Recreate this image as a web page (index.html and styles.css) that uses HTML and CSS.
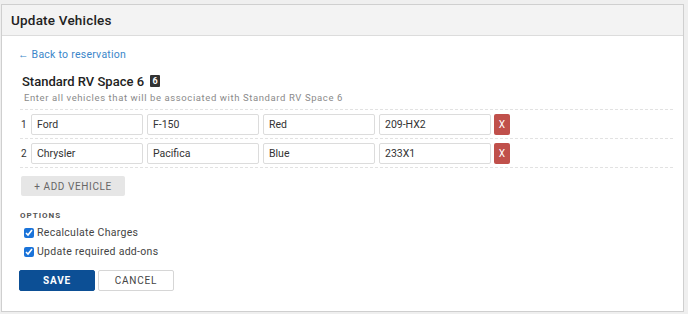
FILE: index.html
```html
<!DOCTYPE html>
<html lang="en">
<head>
    <meta charset="UTF-8">
    <title>Update Vehicles</title>
    <link rel="stylesheet" href="styles.css">
</head>
<body>
    <div class="panel">
        <div class="panel-header">
            <h1>Update Vehicles</h1>
        </div>
        <div class="panel-body">
            <a class="back-link" href="#">&larr; Back to reservation</a>

            <div class="site">
                <h2>Standard RV Space 6 <span class="badge">6</span></h2>
                <p class="hint">Enter all vehicles that will be associated with Standard RV Space 6</p>
            </div>

            <div class="vehicles">
                <div class="vehicle-row">
                    <span class="row-num">1</span>
                    <input type="text" value="Ford">
                    <input type="text" value="F-150">
                    <input type="text" value="Red">
                    <input type="text" value="209-HX2">
                    <button class="remove">X</button>
                </div>
                <div class="vehicle-row">
                    <span class="row-num">2</span>
                    <input type="text" value="Chrysler">
                    <input type="text" value="Pacifica">
                    <input type="text" value="Blue">
                    <input type="text" value="233X1">
                    <button class="remove">X</button>
                </div>
            </div>

            <button class="add-vehicle">+ ADD VEHICLE</button>

            <div class="options">
                <div class="options-title">OPTIONS</div>
                <label class="check"><input type="checkbox" checked> Recalculate Charges</label>
                <label class="check"><input type="checkbox" checked> Update required add-ons</label>
            </div>

            <div class="actions">
                <button class="btn-save">SAVE</button>
                <button class="btn-cancel">CANCEL</button>
            </div>
        </div>
    </div>
</body>
</html>
```

FILE: styles.css
```css
* {
    box-sizing: border-box;
    margin: 0;
    padding: 0;
}

body {
    font-family: Roboto, "Liberation Sans", sans-serif;
    background-color: #efefef;
    padding: 4px 4px 0 1px;
    color: #333;
}

.panel {
    background-color: #fff;
    border: 1px solid #cfcfcf;
    height: 308px;
}

.panel-header {
    background-color: #f3f3f3;
    border-bottom: 1px solid #dcdcdc;
    height: 31px;
    padding: 0 9px;
    display: flex;
    align-items: center;
}

h1 {
    font-size: 13.5px;
    font-weight: 500;
    color: #222;
    letter-spacing: 0.2px;
}

.panel-body {
    padding: 12px 10px 0 16px;
}

.back-link {
    display: block;
    font-size: 10.5px;
    color: #3b86c9;
    text-decoration: none;
    letter-spacing: 0.25px;
    height: 14px;
    line-height: 14px;
}

.site {
    margin-top: 10px;
    padding-left: 4px;
}

h2 {
    font-size: 13px;
    font-weight: 500;
    color: #222;
    display: flex;
    align-items: center;
    gap: 6px;
    height: 18px;
}

.badge {
    background-color: #333;
    color: #fff;
    font-size: 9px;
    font-weight: 700;
    width: 10px;
    height: 12px;
    display: inline-flex;
    align-items: center;
    justify-content: center;
    border-radius: 1px;
}

.hint {
    font-size: 9.5px;
    color: #8a8a8a;
    letter-spacing: 0.6px;
    margin-top: 2px;
    padding-left: 2px;
}

.vehicles {
    margin-top: 6px;
    margin-left: 2px;
    border-top: 1px dashed #e2e2e2;
}

.vehicle-row {
    display: flex;
    align-items: center;
    gap: 3px;
    padding: 3px 0;
    border-bottom: 1px dashed #e2e2e2;
    height: 29px;
}

.row-num {
    font-size: 10px;
    width: 8px;
    padding-left: 1px;
    color: #333;
}

.vehicle-row input {
    width: 112px;
    height: 21px;
    border: 1px solid #dcdcdc;
    border-radius: 2px;
    padding: 0 5px;
    font-family: inherit;
    font-size: 10.5px;
    color: #333;
    margin-right: 1px;
}

.remove {
    background-color: #c0504b;
    color: #fff;
    border: none;
    border-radius: 2px;
    width: 16px;
    height: 21px;
    font-family: inherit;
    font-size: 10px;
    margin-left: -1px;
}

.add-vehicle {
    margin-top: 8px;
    margin-left: 3px;
    width: 104px;
    height: 20px;
    background-color: #e6e6e6;
    color: #666;
    border: none;
    border-radius: 2px;
    font-family: inherit;
    font-size: 10px;
    letter-spacing: 0.6px;
}

.options {
    margin-top: 15px;
    padding-left: 2px;
}

.options-title {
    font-size: 8px;
    font-weight: 700;
    letter-spacing: 1px;
    color: #555;
    height: 12px;
}

.check {
    display: flex;
    align-items: center;
    gap: 3px;
    font-size: 10.5px;
    color: #444;
    letter-spacing: 0.3px;
    height: 19px;
    padding-left: 4px;
}

.check input {
    width: 10px;
    height: 10px;
    accent-color: #1a73d9;
}

.actions {
    margin-top: 9px;
    display: flex;
    gap: 3px;
    padding-left: 1px;
}

.actions button {
    width: 76px;
    height: 21px;
    font-family: inherit;
    font-size: 10px;
    letter-spacing: 0.8px;
    border-radius: 2px;
}

.btn-save {
    background-color: #0c4f95;
    color: #fff;
    border: 1px solid #0c4f95;
    font-weight: 700;
}

.btn-cancel {
    background-color: #fff;
    color: #444;
    border: 1px solid #d6d6d6;
}
```
